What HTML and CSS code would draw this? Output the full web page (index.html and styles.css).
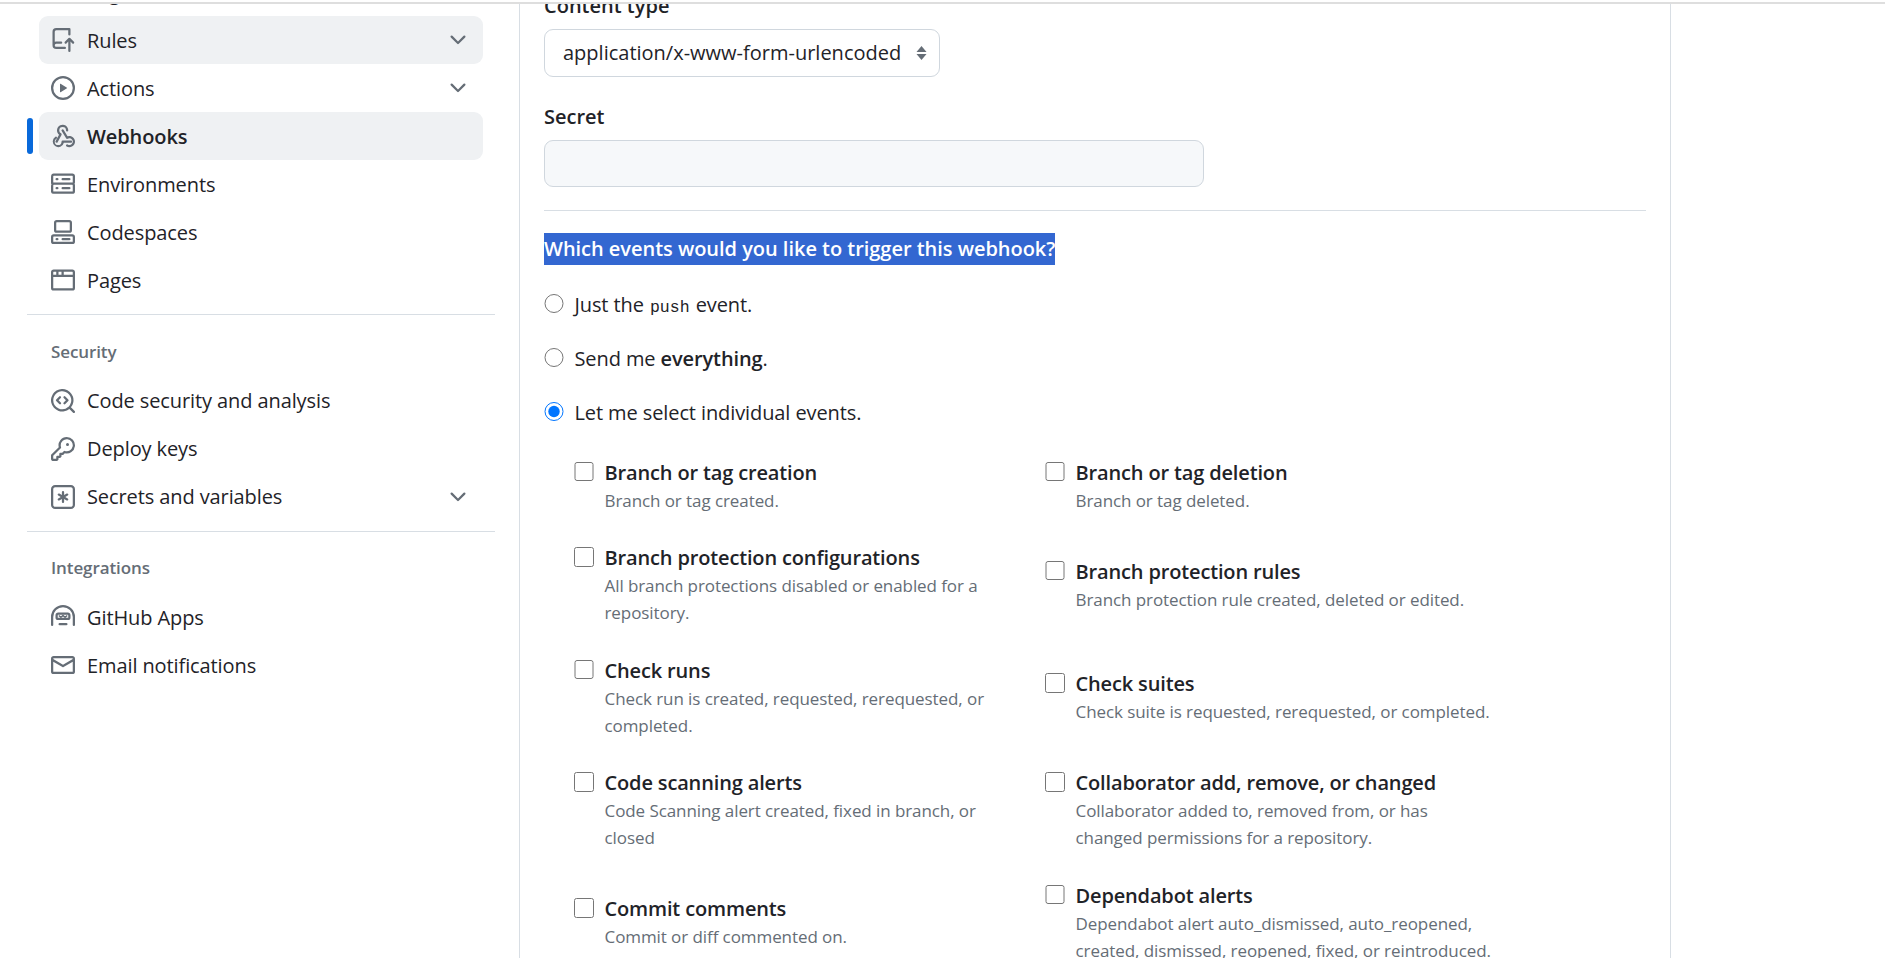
FILE: index.html
```html
<!DOCTYPE html>
<html lang="en">
<head>
  <meta charset="UTF-8">
  <title>Webhooks</title>
  <link rel="stylesheet" href="styles.css">
</head>
<body>
  <div class="page">
    <aside class="sidebar">
      <nav class="nav-group nav-first">
        <a class="nav-item"><span class="nav-label nav-plain">Tags</span></a>
        <a class="nav-item nav-hover">
          <svg class="icon" viewBox="0 0 16 16"><path d="M1 2.5A2.5 2.5 0 0 1 3.5 0h8.75a.75.75 0 0 1 .75.75v3.5a.75.75 0 0 1-1.5 0V1.5h-8a1 1 0 0 0-1 1v6.708A2.493 2.493 0 0 1 3.5 9h3.25a.75.75 0 0 1 0 1.5H3.5a1 1 0 0 0 0 2h5.75a.75.75 0 0 1 0 1.5H3.5A2.5 2.5 0 0 1 1 11.5Zm13.23 7.79h-.001l-1.224-1.224v6.184a.75.75 0 0 1-1.5 0V9.066L10.28 10.29a.75.75 0 0 1-1.06-1.06l2.505-2.504a.75.75 0 0 1 1.06 0L15.29 9.23a.75.75 0 0 1-.018 1.042.75.75 0 0 1-1.042.018Z"/></svg>
          <span class="nav-label">Rules</span>
          <svg class="chevron" viewBox="0 0 16 16"><path d="M12.78 5.22a.749.749 0 0 1 0 1.06l-4.25 4.25a.749.749 0 0 1-1.06 0L3.22 6.28a.749.749 0 1 1 1.06-1.06L8 8.939l3.72-3.719a.749.749 0 0 1 1.06 0Z"/></svg>
        </a>
        <a class="nav-item">
          <svg class="icon" viewBox="0 0 16 16"><path d="M8 0a8 8 0 1 1 0 16A8 8 0 0 1 8 0ZM1.5 8a6.5 6.5 0 1 0 13 0 6.5 6.5 0 0 0-13 0Zm4.879-2.773 4.264 2.559a.25.25 0 0 1 0 .428l-4.264 2.559A.25.25 0 0 1 6 10.559V5.442a.25.25 0 0 1 .379-.215Z"/></svg>
          <span class="nav-label">Actions</span>
          <svg class="chevron" viewBox="0 0 16 16"><path d="M12.78 5.22a.749.749 0 0 1 0 1.06l-4.25 4.25a.749.749 0 0 1-1.06 0L3.22 6.28a.749.749 0 1 1 1.06-1.06L8 8.939l3.72-3.719a.749.749 0 0 1 1.06 0Z"/></svg>
        </a>
        <a class="nav-item nav-hover nav-current">
          <svg class="icon" viewBox="0 0 16 16"><path d="M5.5 4.25a2.25 2.25 0 0 1 4.5 0 .75.75 0 0 0 1.5 0 3.75 3.75 0 1 0-6.14 2.889l-2.272 4.258a.75.75 0 0 0 1.324.706L7 7.25a.75.75 0 0 0-.309-1.015A2.25 2.25 0 0 1 5.5 4.25Z"/><path d="M7.364 3.607a.75.75 0 0 1 1.03.257l2.608 4.349a3.75 3.75 0 1 1-.628 6.785.75.75 0 0 1 .752-1.299 2.25 2.25 0 1 0-.033-3.88.75.75 0 0 1-1.03-.256L7.107 4.636a.75.75 0 0 1 .257-1.03Z"/><path d="M2.5 11.75c0-.844.465-1.58 1.155-1.965a.75.75 0 0 0-.73-1.31A3.75 3.75 0 1 0 8.567 12.5h4.779a.75.75 0 0 0 0-1.5H7.75a.75.75 0 0 0-.75.75 2.25 2.25 0 0 1-4.5 0Z"/></svg>
          <span class="nav-label">Webhooks</span>
        </a>
        <a class="nav-item">
          <svg class="icon" viewBox="0 0 16 16"><path d="M1.75 1h12.5c.966 0 1.75.784 1.75 1.75v4c0 .372-.116.717-.314 1 .198.283.314.628.314 1v4a1.75 1.75 0 0 1-1.75 1.75H1.75A1.75 1.75 0 0 1 0 13.25v-4c0-.372.116-.717.314-1a1.739 1.739 0 0 1-.314-1v-4C0 1.784.784 1 1.75 1ZM1.5 2.75v4c0 .138.112.25.25.25h12.5a.25.25 0 0 0 .25-.25v-4a.25.25 0 0 0-.25-.25H1.75a.25.25 0 0 0-.25.25Zm.25 5.75a.25.25 0 0 0-.25.25v4c0 .138.112.25.25.25h12.5a.25.25 0 0 0 .25-.25v-4a.25.25 0 0 0-.25-.25ZM7 4.75A.75.75 0 0 1 7.75 4h4.5a.75.75 0 0 1 0 1.5h-4.5A.75.75 0 0 1 7 4.75ZM7.75 10h4.5a.75.75 0 0 1 0 1.5h-4.5a.75.75 0 0 1 0-1.5ZM3 4.75A.75.75 0 0 1 3.75 4h.5a.75.75 0 0 1 0 1.5h-.5A.75.75 0 0 1 3 4.75ZM3.75 10h.5a.75.75 0 0 1 0 1.5h-.5a.75.75 0 0 1 0-1.5Z"/></svg>
          <span class="nav-label">Environments</span>
        </a>
        <a class="nav-item">
          <svg class="icon" viewBox="0 0 16 16"><path d="M0 11.25c0-.966.784-1.75 1.75-1.75h12.5c.966 0 1.75.784 1.75 1.75v3A1.75 1.75 0 0 1 14.25 16H1.75A1.75 1.75 0 0 1 0 14.25Zm2-9.5C2 .784 2.784 0 3.75 0h8.5C13.216 0 14 .784 14 1.75v5a1.75 1.75 0 0 1-1.75 1.75h-8.5A1.75 1.75 0 0 1 2 6.75Zm1.75-.25a.25.25 0 0 0-.25.25v5c0 .138.112.25.25.25h8.5a.25.25 0 0 0 .25-.25v-5a.25.25 0 0 0-.25-.25Zm-2 9.5a.25.25 0 0 0-.25.25v3c0 .138.112.25.25.25h12.5a.25.25 0 0 0 .25-.25v-3a.25.25 0 0 0-.25-.25Z"/><path d="M7 12.75a.75.75 0 0 1 .75-.75h4.5a.75.75 0 0 1 0 1.5h-4.5a.75.75 0 0 1-.75-.75Zm-4 0a.75.75 0 0 1 .75-.75h.5a.75.75 0 0 1 0 1.5h-.5a.75.75 0 0 1-.75-.75Z"/></svg>
          <span class="nav-label">Codespaces</span>
        </a>
        <a class="nav-item">
          <svg class="icon" viewBox="0 0 16 16"><path d="M0 2.75C0 1.784.784 1 1.75 1h12.5c.966 0 1.75.784 1.75 1.75v10.5A1.75 1.75 0 0 1 14.25 15H1.75A1.75 1.75 0 0 1 0 13.25ZM14.5 6h-13v7.25c0 .138.112.25.25.25h12.5a.25.25 0 0 0 .25-.25Zm-6-3.5v2h6V2.75a.25.25 0 0 0-.25-.25ZM5 2.5v2h2v-2Zm-3.25 0a.25.25 0 0 0-.25.25V4.5h2v-2Z"/></svg>
          <span class="nav-label">Pages</span>
        </a>
      </nav>

      <nav class="nav-group">
        <h2 class="nav-heading">Security</h2>
        <a class="nav-item">
          <svg class="icon" viewBox="0 0 16 16"><path d="M8.47 4.97a.75.75 0 0 0 0 1.06L9.94 7.5 8.47 8.97a.75.75 0 1 0 1.06 1.06l2-2a.75.75 0 0 0 0-1.06l-2-2a.75.75 0 0 0-1.06 0ZM6.53 6.03a.75.75 0 0 0-1.06-1.06l-2 2a.75.75 0 0 0 0 1.06l2 2a.75.75 0 1 0 1.06-1.06L5.06 7.5l1.47-1.47Z"/><path d="M12.246 13.307a7.501 7.501 0 1 1 1.06-1.06l2.474 2.473a.749.749 0 0 1-.326 1.275.749.749 0 0 1-.734-.215ZM1.5 7.5a6.002 6.002 0 0 0 3.608 5.504 6.002 6.002 0 0 0 6.486-1.117.748.748 0 0 1 .292-.293A6 6 0 1 0 1.5 7.5Z"/></svg>
          <span class="nav-label">Code security and analysis</span>
        </a>
        <a class="nav-item">
          <svg class="icon" viewBox="0 0 16 16"><path d="M10.5 0a5.499 5.499 0 1 1-1.288 10.848l-.932.932a.749.749 0 0 1-.53.22H7v.75a.749.749 0 0 1-.22.53l-.5.5a.749.749 0 0 1-.53.22H5v.75a.749.749 0 0 1-.22.53l-.5.5a.749.749 0 0 1-.53.22h-2A1.75 1.75 0 0 1 0 14.25v-2c0-.199.079-.389.22-.53l4.932-4.932A5.5 5.5 0 0 1 10.5 0Zm-4 5.5c-.001.431.069.86.205 1.269a.75.75 0 0 1-.181.768L1.5 12.56v1.69c0 .138.112.25.25.25h1.69l.06-.06v-1.19a.75.75 0 0 1 .75-.75h1.19l.06-.06v-1.19a.75.75 0 0 1 .75-.75h1.19l1.023-1.025a.75.75 0 0 1 .768-.18A4 4 0 1 0 6.5 5.5ZM11 6a1 1 0 1 1 0-2 1 1 0 0 1 0 2Z"/></svg>
          <span class="nav-label">Deploy keys</span>
        </a>
        <a class="nav-item">
          <svg class="icon" viewBox="0 0 16 16"><path d="M0 2.75A2.75 2.75 0 0 1 2.75 0h10.5A2.75 2.75 0 0 1 16 2.75v10.5A2.75 2.75 0 0 1 13.25 16H2.75A2.75 2.75 0 0 1 0 13.25ZM2.75 1.5c-.69 0-1.25.56-1.25 1.25v10.5c0 .69.56 1.25 1.25 1.25h10.5c.69 0 1.25-.56 1.25-1.25V2.75c0-.69-.56-1.25-1.25-1.25Z"/><path d="M8 4a.75.75 0 0 1 .75.75V6.7l1.69-.975a.75.75 0 0 1 .75 1.3L9.5 8l1.69.976a.75.75 0 0 1-.75 1.298L8.75 9.3v1.951a.75.75 0 0 1-1.5 0V9.299l-1.69.976a.75.75 0 0 1-.75-1.3L6.5 8l-1.69-.975a.75.75 0 0 1 .75-1.3l1.69.976V4.75A.75.75 0 0 1 8 4Z"/></svg>
          <span class="nav-label">Secrets and variables</span>
          <svg class="chevron" viewBox="0 0 16 16"><path d="M12.78 5.22a.749.749 0 0 1 0 1.06l-4.25 4.25a.749.749 0 0 1-1.06 0L3.22 6.28a.749.749 0 1 1 1.06-1.06L8 8.939l3.72-3.719a.749.749 0 0 1 1.06 0Z"/></svg>
        </a>
      </nav>

      <nav class="nav-group">
        <h2 class="nav-heading">Integrations</h2>
        <a class="nav-item">
          <svg class="icon" viewBox="0 0 16 16"><path d="M0 8a8 8 0 0 1 16 0v5.25a.75.75 0 0 1-1.5 0V8a6.5 6.5 0 1 0-13 0v5.25a.75.75 0 0 1-1.5 0Z"/><path d="M3 6.75C3 5.784 3.784 5 4.75 5h6.5c.966 0 1.75.784 1.75 1.75v1.5A1.75 1.75 0 0 1 11.25 10h-6.5A1.75 1.75 0 0 1 3 8.25Zm1.75-.25a.25.25 0 0 0-.25.25v1.5c0 .138.112.25.25.25h6.5a.25.25 0 0 0 .25-.25v-1.5a.25.25 0 0 0-.25-.25Z"/><path class="icon-line" d="M5.2 7 6.6 8.2 8 7l1.4 1.2L10.8 7"/><path d="M5.75 12h4.5a.75.75 0 0 1 0 1.5h-4.5a.75.75 0 0 1 0-1.5Z"/></svg>
          <span class="nav-label">GitHub Apps</span>
        </a>
        <a class="nav-item">
          <svg class="icon" viewBox="0 0 16 16"><path d="M1.75 2h12.5c.966 0 1.75.784 1.75 1.75v8.5A1.75 1.75 0 0 1 14.25 14H1.75A1.75 1.75 0 0 1 0 12.25v-8.5C0 2.784.784 2 1.75 2ZM1.5 12.251c0 .138.112.25.25.25h12.5a.25.25 0 0 0 .25-.25V5.809L8.38 9.397a.75.75 0 0 1-.76 0L1.5 5.809v6.442Zm13-8.181v-.32a.25.25 0 0 0-.25-.25H1.75a.25.25 0 0 0-.25.25v.32L8 7.88Z"/></svg>
          <span class="nav-label">Email notifications</span>
        </a>
      </nav>
    </aside>

    <main class="content">
      <label class="field-label field-first">Content type</label>
      <div class="select-box">
        <span>application/x-www-form-urlencoded</span>
        <svg class="select-caret" viewBox="0 0 11 14"><path d="M5.5 0 10.5 6H.5Z"/><path d="M5.5 14 .5 8H10.5Z"/></svg>
      </div>

      <label class="field-label">Secret</label>
      <input class="secret-input" type="text">

      <hr class="divider">

      <p class="events-title"><span class="selected-text">Which events would you like to trigger this webhook?</span></p>

      <label class="radio-row"><input type="radio" name="events"><span>Just the <code>push</code> event.</span></label>
      <label class="radio-row"><input type="radio" name="events"><span>Send me <strong>everything</strong>.</span></label>
      <label class="radio-row"><input type="radio" name="events" checked><span>Let me select individual events.</span></label>

      <div class="events">
        <div class="events-col">
          <label class="event">
            <input type="checkbox">
            <span class="event-text"><span class="event-name">Branch or tag creation</span><span class="event-desc">Branch or tag created.</span></span>
          </label>
          <label class="event">
            <input type="checkbox">
            <span class="event-text"><span class="event-name">Branch protection configurations</span><span class="event-desc">All branch protections disabled or enabled for a repository.</span></span>
          </label>
          <label class="event">
            <input type="checkbox">
            <span class="event-text"><span class="event-name">Check runs</span><span class="event-desc">Check run is created, requested, rerequested, or completed.</span></span>
          </label>
          <label class="event event-gap">
            <input type="checkbox">
            <span class="event-text"><span class="event-name">Code scanning alerts</span><span class="event-desc">Code Scanning alert created, fixed in branch, or closed</span></span>
          </label>
          <label class="event">
            <input type="checkbox">
            <span class="event-text"><span class="event-name">Commit comments</span><span class="event-desc">Commit or diff commented on.</span></span>
          </label>
        </div>
        <div class="events-col events-col-right">
          <label class="event event-gap">
            <input type="checkbox">
            <span class="event-text"><span class="event-name">Branch or tag deletion</span><span class="event-desc">Branch or tag deleted.</span></span>
          </label>
          <label class="event event-gap-lg">
            <input type="checkbox">
            <span class="event-text"><span class="event-name">Branch protection rules</span><span class="event-desc">Branch protection rule created, deleted or edited.</span></span>
          </label>
          <label class="event event-gap">
            <input type="checkbox">
            <span class="event-text"><span class="event-name">Check suites</span><span class="event-desc">Check suite is requested, rerequested, or completed.</span></span>
          </label>
          <label class="event">
            <input type="checkbox">
            <span class="event-text"><span class="event-name">Collaborator add, remove, or changed</span><span class="event-desc">Collaborator added to, removed from, or has changed permissions for a repository.</span></span>
          </label>
          <label class="event">
            <input type="checkbox">
            <span class="event-text"><span class="event-name">Dependabot alerts</span><span class="event-desc">Dependabot alert auto_dismissed, auto_reopened, created, dismissed, reopened, fixed, or reintroduced.</span></span>
          </label>
        </div>
      </div>
    </main>
  </div>
</body>
</html>
```

FILE: styles.css
```css
* {
  box-sizing: border-box;
}

html, body {
  height: 100%;
}

body {
  margin: 0;
  padding-top: 2px;
  overflow: hidden;
  background-color: #fff;
  color: #1f2328;
  font-family: "Open Sans", "Noto Sans", sans-serif;
  font-size: 20px;
  line-height: 31.5px;
}

.page {
  display: flex;
  height: 956px;
  border-top: 2px solid #dedede;
  overflow: hidden;
}

/* sidebar */
.sidebar {
  flex: 0 0 520px;
  padding-left: 27px;
  padding-right: 24px;
  border-right: 1.5px solid #d8dee4;
}

.nav-first {
  margin-top: -36px;
}

.nav-group {
  padding-bottom: 10px;
  border-bottom: 1.5px solid #d8dee4;
}

.nav-group:last-child {
  border-bottom: 0;
}

.nav-heading {
  margin: 0;
  padding: 22.5px 24px 12px;
  color: #656d76;
  font-size: 17px;
  font-weight: 600;
  line-height: 27px;
  letter-spacing: -0.1px;
}

.nav-item {
  position: relative;
  display: flex;
  align-items: center;
  gap: 12px;
  height: 48px;
  margin: 0 12px;
  padding: 0 12px;
  border-radius: 9px;
}

.nav-hover {
  background-color: #eff1f3;
}

.nav-current .nav-label {
  font-weight: 600;
}

.nav-current::before {
  content: "";
  position: absolute;
  left: -12px;
  top: 6px;
  width: 6px;
  height: 36px;
  border-radius: 4px;
  background-color: #0969da;
}

.nav-plain {
  margin-left: 36px;
}

.nav-label {
  flex: 1;
  padding-top: 1px;
  letter-spacing: -0.1px;
}

.icon {
  flex: none;
  width: 24px;
  height: 24px;
  fill: #656d76;
}

.icon-line {
  fill: none;
  stroke: #656d76;
  stroke-width: 0.9;
}

.chevron {
  flex: none;
  width: 24px;
  height: 24px;
  margin-right: 1px;
  fill: #656d76;
}

/* main column */
.content {
  flex: 0 0 1151px;
  padding: 0 24px;
  border-right: 1.5px solid #d8dee4;
}

.field-label {
  display: block;
  margin: 24px 0 7px;
  font-weight: 600;
}

.field-first {
  margin-top: -14px;
  margin-bottom: 7.5px;
}

.select-box {
  display: flex;
  align-items: center;
  justify-content: space-between;
  width: 396px;
  height: 48px;
  padding: 0 12px 0 18px;
  border: 1.5px solid #d0d7de;
  border-radius: 9px;
}

.select-caret {
  width: 11px;
  height: 14px;
  fill: #656d76;
}

.secret-input {
  display: block;
  width: 660px;
  height: 47.5px;
  border: 1.5px solid #d0d7de;
  border-radius: 9px;
  background-color: #f6f8fa;
}

.divider {
  height: 0;
  margin: 23px 0 22px;
  border: 0;
  border-top: 1.5px solid #d8dee4;
}

.events-title {
  margin: 0 0 24px;
  font-weight: 600;
  letter-spacing: -0.03px;
}

.selected-text {
  display: inline-block;
  background-color: #3367d1;
  color: #fff;
}

.radio-row {
  display: flex;
  align-items: center;
  gap: 11px;
  margin-bottom: 22.5px;
  letter-spacing: -0.1px;
}

.radio-row input {
  width: 19.5px;
  height: 19.5px;
  margin: 0 0 2px;
}

code {
  margin: 0 1px;
  font-family: "Liberation Mono", monospace;
  font-size: 16.5px;
  line-height: 1;
  letter-spacing: 0;
}

strong {
  font-weight: 600;
}

.events {
  display: flex;
  margin-top: 28.5px;
  padding-left: 30px;
}

.events-col {
  flex: 0 0 471px;
}

.event {
  display: flex;
  align-items: flex-start;
  gap: 11px;
  margin-bottom: 28.5px;
  padding-right: 40px;
}

.events-col-right .event {
  padding-right: 20px;
}

.event-gap {
  margin-bottom: 42px;
}

.event-gap-lg {
  margin-bottom: 55.5px;
}

.event input {
  flex: none;
  width: 19.5px;
  height: 19.5px;
  margin: 5px 0 0;
}

.event-text {
  display: block;
}

.event-name {
  display: block;
  margin-bottom: -1.5px;
  font-weight: 600;
  letter-spacing: -0.15px;
}

.event-desc {
  display: block;
  color: #656d76;
  font-size: 17px;
  line-height: 27px;
  letter-spacing: -0.08px;
}
```
